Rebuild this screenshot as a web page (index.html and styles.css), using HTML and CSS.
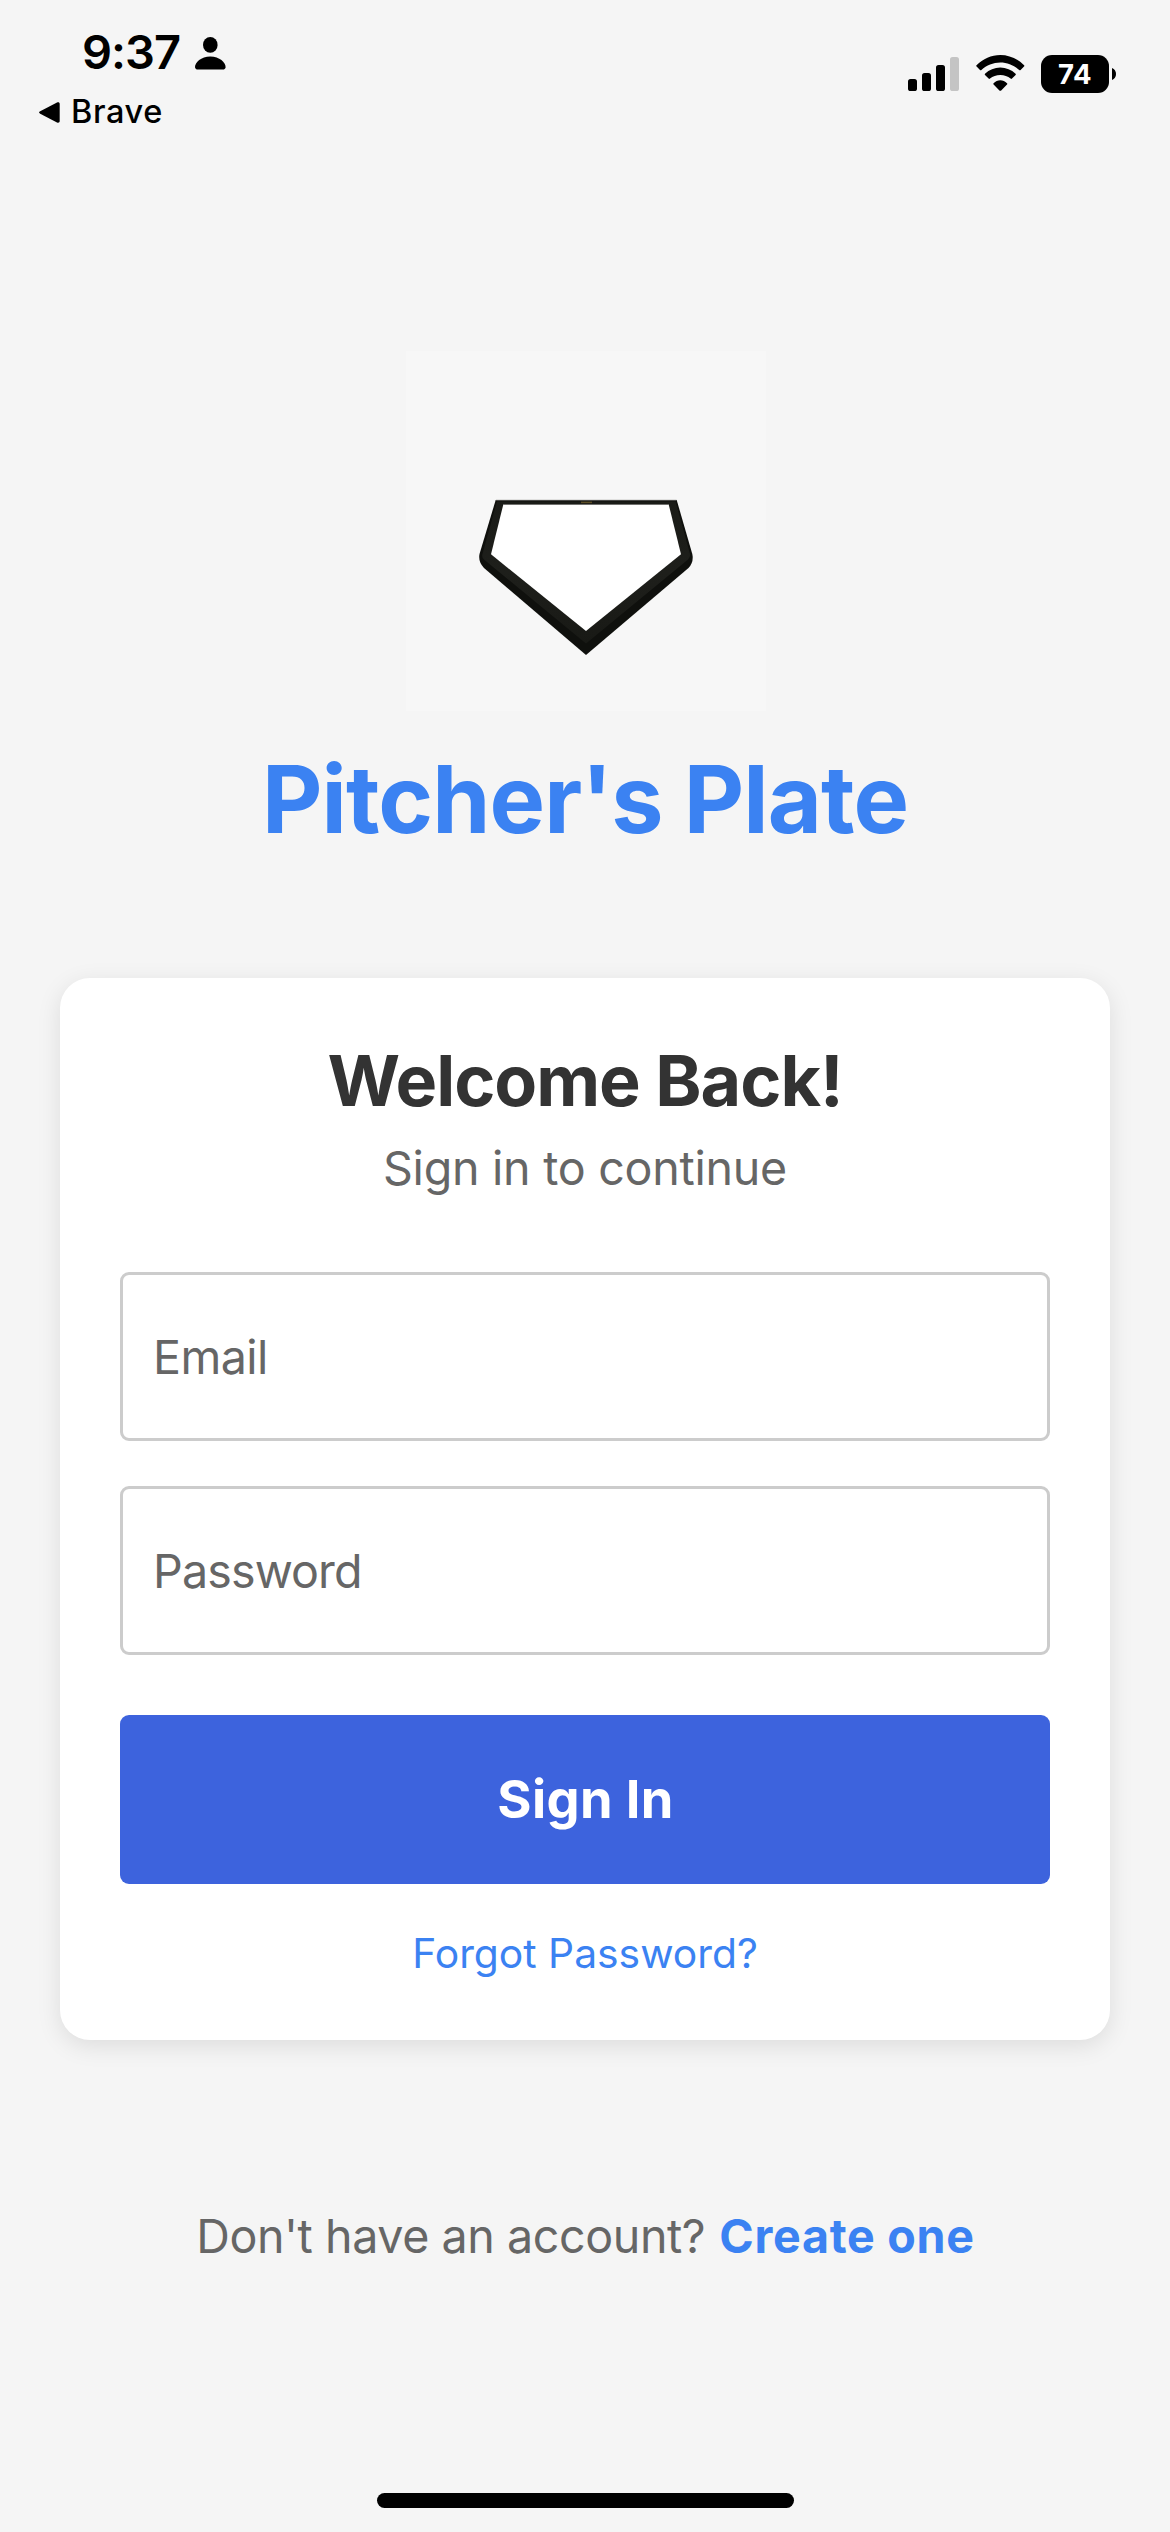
FILE: index.html
```html
<!DOCTYPE html>
<html lang="en">
<head>
<meta charset="utf-8">
<title>Pitcher's Plate</title>
<link rel="stylesheet" href="styles.css">
</head>
<body>
<header class="status">
  <div class="status-left">
    <div class="clock">
      <span class="time">9:37</span>
      <svg class="person" viewBox="0 0 31 33" aria-hidden="true">
        <ellipse cx="15.3" cy="7.9" rx="7.3" ry="7.9"/>
        <path d="M3 32.6C1 32.6 0 31.500 0 30C0 25.500 6 19.400 15.300 19.400S30.600 25.500 30.600 30C30.600 31.500 29.600 32.600 27.600 32.600Z"/>
      </svg>
    </div>
    <div class="back">
      <svg class="back-arrow" viewBox="0 0 21 21" aria-hidden="true"><path d="M1.200 9.300 18 .6C19.500-.1 20.700.6 20.700 2V19C20.700 20.400 19.500 21.100 18 20.400L1.200 11.700C-.3 10.900-.3 10.100 1.200 9.300Z"/></svg>
      <span>Brave</span>
    </div>
  </div>
  <div class="status-right">
    <svg class="signal" viewBox="0 0 51 34" aria-hidden="true">
      <rect x="0" y="22" width="9" height="12" rx="2.600"/>
      <rect x="14" y="16" width="9" height="18" rx="2.600"/>
      <rect x="28" y="8" width="9" height="26" rx="2.600"/>
      <rect class="dim" x="42" y="0" width="9" height="34" rx="2.600"/>
    </svg>
    <svg class="wifi" viewBox="0 0 49 36" aria-hidden="true">
      <path d="M.5 10.200C7 3.800 15.300 0 24.300 0S41.600 3.800 48.100 10.200Q48.700 10.900 48 11.600L44.600 15Q43.900 15.600 43.200 15C38 10.300 31.500 7.500 24.300 7.500S10.600 10.300 5.400 15Q4.700 15.600 4 15L.6 11.600Q-.1 10.900.5 10.200Z"/>
      <path d="M9 18.700C13.200 14.900 18.500 12.600 24.300 12.600S35.400 14.900 39.600 18.700Q40.200 19.400 39.600 20L36 23.600Q35.300 24.200 34.600 23.600C31.800 21.200 28.200 19.900 24.300 19.900S16.800 21.200 14 23.600Q13.300 24.200 12.600 23.600L9 20Q8.400 19.400 9 18.700Z"/>
      <path d="M17.600 28.300C19.500 26.400 21.800 25.300 24.300 25.300S29.100 26.400 31 28.300Q31.600 29 31 29.600L25.200 35.400Q24.300 36.200 23.400 35.400L17.600 29.600Q17 29 17.600 28.300Z"/>
    </svg>
    <div class="battery">
      <span class="level">74</span>
      <svg class="nub" viewBox="0 0 4 12" aria-hidden="true"><path d="M0 0C2.500 1 4 3.300 4 6S2.500 11 0 12Z"/></svg>
    </div>
  </div>
</header>

<main class="page">
  <svg class="logo" viewBox="0 0 360 360" role="img" aria-label="Home plate">
    <defs>
      <linearGradient id="rim" x1="0" y1="0" x2="0" y2="1">
        <stop offset="0" stop-color="#1a1b17"/>
        <stop offset=".5" stop-color="#1e1f1b"/>
        <stop offset="1" stop-color="#181915"/>
      </linearGradient>
    </defs>
    <path class="plate-edge" d="M89.700 149H270.700L286.300 203Q288 211 282.500 217L180 304 78 217Q72 211 73.500 203Z"/>
    <path fill="url(#rim)" d="M91 150.500H269.500L284 203Q284.500 206 282 208.500L180 292.500 78 208.500Q75.500 206 76.500 203Z"/>
    <path class="plate-face" d="M97.300 153.500H262.700L275 203.300 180 280 85 203.300Z"/>
    <path class="plate-lip" d="M90 149.300H270.500M98 153.500H262"/>
    <path class="plate-mark" d="M175 151.400h11"/>
  </svg>
  <h1 class="brand">Pitcher's Plate</h1>

  <section class="card">
    <h2 class="welcome">Welcome Back!</h2>
    <p class="hint">Sign in to continue</p>
    <div class="field email">Email</div>
    <div class="field password">Password</div>
    <button class="submit" type="button">Sign In</button>
    <a class="forgot">Forgot Password?</a>
  </section>

  <p class="signup"><span class="ask">Don't have an account?</span><a class="create">Create one</a></p>
</main>
<div class="home-bar"></div>
</body>
</html>
```
FILE: styles.css
```css
* { box-sizing: border-box; margin: 0; padding: 0; }

body {
  width: 1170px;
  height: 2532px;
  display: flex;
  flex-direction: column;
  align-items: center;
  overflow: hidden;
  background: #f5f5f5;
  color: #000;
  font-family: Inter, "Liberation Sans", sans-serif;
}

svg { display: block; flex: none; }

/* Status bar */
.status {
  width: 100%;
  height: 160px;
  display: flex;
  justify-content: space-between;
  padding: 23px 54px 0 39px;
}
.clock { display: flex; height: 60px; padding-left: 43px; gap: 15px; }
.time { width: 98px; font-size: 47px; font-weight: 600; line-height: 58px; letter-spacing: -1px; white-space: nowrap; }
.person { width: 31px; height: 33px; margin-top: 13.500px; }
.back { display: flex; align-items: center; gap: 11px; height: 40px; margin-top: 9px; font-size: 32.500px; font-weight: 450; line-height: 40px; letter-spacing: .6px; }
.back-arrow { width: 21px; height: 21px; }

.status-right { display: flex; height: 38px; margin-top: 32px; }
.signal { width: 51px; height: 34px; margin-top: 2px; }
.signal .dim { fill: #c4c4c4; }
.wifi { width: 49px; height: 36px; margin-left: 17px; }
.battery { display: flex; align-items: center; gap: 3px; margin-left: 16px; }
.level {
  width: 68px;
  height: 38px;
  border-radius: 11px;
  background: #000;
  color: #fff;
  font-size: 27.500px;
  font-weight: 700;
  line-height: 38px;
  text-align: center;
  letter-spacing: .5px;
}
.nub { width: 4px; height: 12px; }

/* Page */
.page {
  width: 100%;
  display: flex;
  flex-direction: column;
  align-items: center;
  padding: 191px 60px 0;
}
.logo { width: 360px; height: 360px; margin-left: 2px; background: #f7f7f7; }
.plate-edge { fill: #0f100d; }
.plate-face { fill: #fff; }
.plate-lip { fill: none; stroke: #6a6a68; stroke-width: .8; }
.plate-mark { fill: none; stroke: #5b4d26; stroke-width: 1.500; }

.brand { margin-top: 32px; color: #3b82f2; font-size: 93.300px; font-weight: 700; line-height: 114px; letter-spacing: -.89px; white-space: nowrap; }

.card {
  width: 1050px;
  height: 1062px;
  display: flex;
  flex-direction: column;
  align-items: center;
  margin-top: 121px;
  padding: 60px;
  border-radius: 30px;
  background: #fff;
  box-shadow: 0 6px 24px rgba(0, 0, 0, .1);
}
.welcome { color: #333; font-size: 70px; font-weight: 700; line-height: 86px; letter-spacing: -1.020px; }
.hint { margin-top: 15px; color: #666; font-size: 46.600px; line-height: 58px; letter-spacing: -.26px; }
.field {
  width: 100%;
  height: 169px;
  border: 3px solid #ccc;
  border-radius: 9px;
  padding-left: 30px;
  color: #666;
  font-size: 46.600px;
  line-height: 164px;
}
.email { margin-top: 75px; letter-spacing: -.57px; }
.password { margin-top: 45px; letter-spacing: -.87px; }
.submit {
  width: 100%;
  height: 169px;
  margin-top: 60px;
  padding-left: 1px;
  border: 0;
  border-radius: 9px;
  background: #3d63dd;
  color: #fff;
  font: 700 52.400px/169px Inter, "Liberation Sans", sans-serif;
  letter-spacing: .36px;
}
.forgot { margin-top: 44px; color: #3b82f2; font-size: 40.800px; line-height: 50px; }

.signup { display: flex; gap: 14px; margin-top: 168px; padding-left: 1px; font-size: 46.600px; line-height: 57px; white-space: nowrap; }
.ask { color: #666; letter-spacing: -.42px; }
.create { color: #3b82f2; font-weight: 700; letter-spacing: .72px; }

.home-bar { width: 417px; height: 15px; margin-top: auto; margin-bottom: 24px; border-radius: 8px; background: #000; flex: none; }
```
